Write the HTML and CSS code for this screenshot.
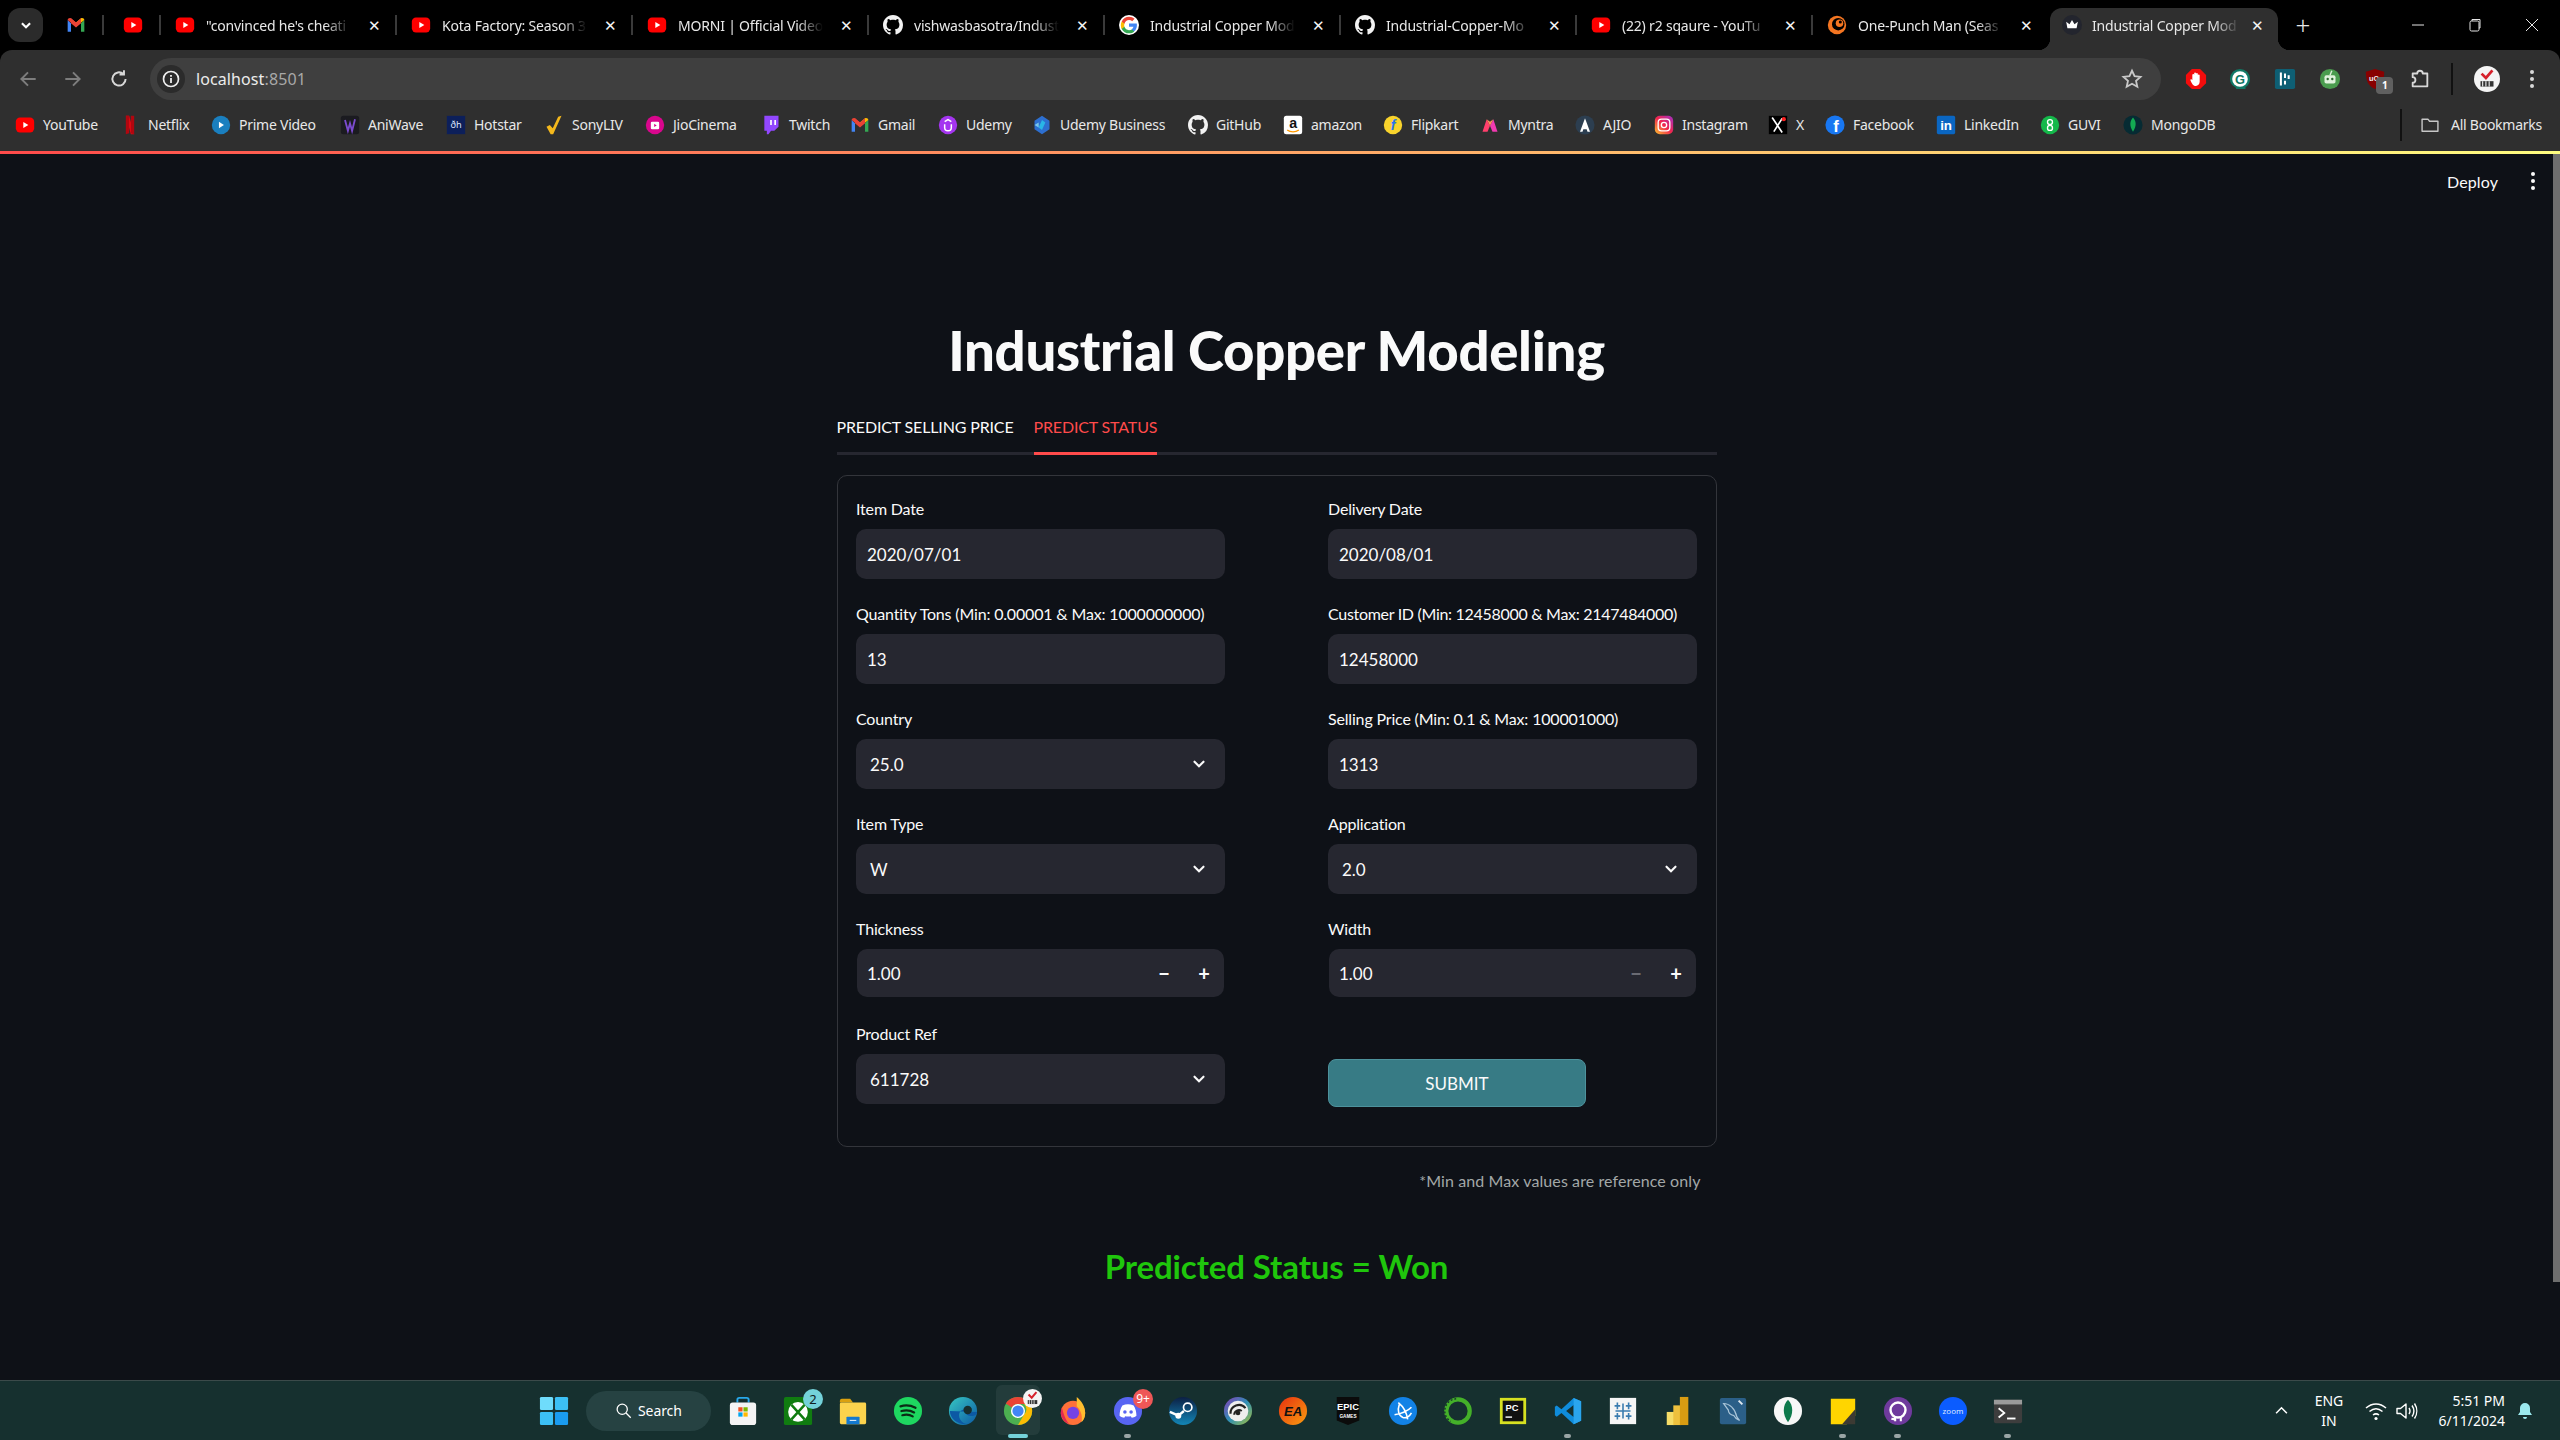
FILE: index.html
```html
<!DOCTYPE html>
<html lang="en">
<head>
<meta charset="utf-8">
<title>Industrial Copper Modeling</title>
<link rel="stylesheet" href="styles.css">
</head>
<body>
<svg class="defs" width="0" height="0" aria-hidden="true">
  <symbol id="yt" viewBox="0 0 24 24"><rect x="1" y="3" width="22" height="18" rx="5" fill="#f00"/><path d="M10 8.500l6 3.500-6 3.500z" fill="#fff"/></symbol>
  <symbol id="gm" viewBox="0 0 24 24"><path d="M2 6v14h4V10z" fill="#4285f4"/><path d="M22 6v14h-4V10z" fill="#34a853"/><path d="M2 6c0-2 2.500-3 4-2l6 5v5L2 6z" fill="#ea4335"/><path d="M22 6c0-2-2.500-3-4-2l-6 5v5l10-8z" fill="#fbbc04"/><path d="M6 4l6 5 6-5v6l-6 5-6-5z" fill="#ea4335"/></symbol>
  <symbol id="gh" viewBox="0 0 16 16"><path fill="#f2f2f2" d="M8 0C3.58 0 0 3.58 0 8c0 3.54 2.29 6.530 5.470 7.590.4.070.550-.170.550-.380 0-.190-.010-.820-.010-1.490-2.010.370-2.530-.490-2.690-.940-.090-.230-.480-.940-.820-1.130-.280-.150-.680-.520-.010-.530.630-.010 1.080.580 1.230.820.720 1.210 1.870.870 2.330.660.070-.520.280-.870.510-1.070-1.780-.200-3.640-.890-3.640-3.950 0-.870.310-1.590.820-2.150-.080-.200-.360-1.020.080-2.120 0 0 .670-.210 2.200.820.640-.180 1.320-.270 2-.270s1.360.090 2 .270c1.530-1.040 2.200-.820 2.200-.820.440 1.100.160 1.920.080 2.120.510.560.820 1.270.820 2.150 0 3.070-1.870 3.750-3.650 3.950.290.250.540.730.540 1.480 0 1.070-.010 1.930-.010 2.200 0 .210.150.460.550.38A8.013 8.013 0 0016 8c0-4.420-3.580-8-8-8z"/></symbol>
  <symbol id="gg" viewBox="0 0 48 48"><circle cx="24" cy="24" r="24" fill="#fff"/><path fill="#4285f4" d="M43 24.400c0-1.300-.100-2.600-.400-3.900H24v7.400h10.700c-.500 2.400-1.900 4.500-3.900 5.800v4.800h6.300c3.700-3.400 5.900-8.400 5.900-14.100z"/><path fill="#34a853" d="M24 44c5.300 0 9.700-1.700 13-4.700l-6.300-4.800c-1.800 1.200-4 1.900-6.700 1.900-5.100 0-9.500-3.400-11-8.100H6.500v5C9.800 39.700 16.500 44 24 44z"/><path fill="#fbbc04" d="M13 28.300c-.800-2.400-.800-5.100 0-7.600v-5H6.500c-2.800 5.500-2.800 12 0 17.600z"/><path fill="#ea4335" d="M24 11.900c2.900-.100 5.600 1 7.700 3l5.700-5.700C33.800 5.800 29 3.900 24 4 16.500 4 9.800 8.300 6.500 15.700l6.500 5c1.500-4.700 5.900-8.800 11-8.800z"/></symbol>
  <symbol id="cr" viewBox="0 0 24 24"><circle cx="12" cy="12" r="11" fill="#f47521"/><circle cx="13.500" cy="11" r="7.500" fill="#000"/><circle cx="15" cy="10" r="4.500" fill="#f47521"/><circle cx="16" cy="8.500" r="1.800" fill="#000"/></symbol>
  <symbol id="crown" viewBox="0 0 24 24"><circle cx="12" cy="12" r="12" fill="#23252e"/><path d="M5 8l4 3 3-5 3 5 4-3-1.500 8h-11z" fill="#fff"/></symbol>
  <symbol id="nf" viewBox="0 0 24 24"><path d="M7 1h4l6 22h-4z" fill="#e50914"/><path d="M7 1h4v21l-4 1z" fill="#b1060f"/><path d="M13 1h4v22l-4-1z" fill="#b1060f"/></symbol>
  <symbol id="pv" viewBox="0 0 24 24"><circle cx="12" cy="12" r="11" fill="#1a7fbf"/><path d="M9.500 8l6 4-6 4z" fill="#fff"/></symbol>
  <symbol id="aw" viewBox="0 0 24 24"><rect x="1" y="1" width="22" height="22" rx="3" fill="#1b1b20"/><path d="M6 6l3.500 13L12 10l2.500 9L18 5" fill="none" stroke="#7b4bd0" stroke-width="2.200"/></symbol>
  <symbol id="sl" viewBox="0 0 24 24"><path d="M3 14l5 9h3L21 1l-4 1-6.500 14L7 12z" fill="#f4b81c"/></symbol>
  <symbol id="jc" viewBox="0 0 24 24"><circle cx="12" cy="12" r="11" fill="#d9068d"/><rect x="7" y="8" width="10" height="9" rx="1.500" fill="#fff"/><path d="M11 10.500l3 2-3 2z" fill="#d9068d"/></symbol>
  <symbol id="tw" viewBox="0 0 24 24"><path d="M4 1h17v13l-5 5h-4l-3 4H7v-4H4z" fill="#9147ff"/><path d="M11 6h2v6h-2zM16 6h2v6h-2z" fill="#fff"/></symbol>
  <symbol id="ud" viewBox="0 0 24 24"><circle cx="12" cy="12" r="11" fill="#a435f0"/><path d="M8 11v4a4 4 0 008 0v-4M8 8l4-2.500L16 8" fill="none" stroke="#fff" stroke-width="1.800"/></symbol>
  <symbol id="ub" viewBox="0 0 24 24"><path d="M12 1l9 6v10l-9 6-9-6V7z" fill="#2d6fd0"/><path d="M12 6l4 3-4 9-4-3z" fill="#29b6e6"/><path d="M3 12l5-3v6z" fill="#7ac8ea"/></symbol>
  <symbol id="my" viewBox="0 0 24 24"><path d="M3 20L8 5l4 8-3 7z" fill="#ff3f6c"/><path d="M21 20L16 5l-4 8 3 7z" fill="#f13ab1"/><path d="M8 5l4 8 4-8-4 3z" fill="#ff905a"/></symbol>
  <symbol id="aj" viewBox="0 0 24 24"><circle cx="12" cy="12" r="11.500" fill="#2c3e50"/><path d="M12 4l6 16h-3l-1-3h-4l-1 3H6z" fill="#fff"/></symbol>
  <symbol id="ig" viewBox="0 0 24 24"><defs><linearGradient id="igg" x1="0" y1="1" x2="1" y2="0"><stop offset="0" stop-color="#fdc12c"/><stop offset=".5" stop-color="#f0264e"/><stop offset="1" stop-color="#a22fc9"/></linearGradient></defs><rect x="1" y="1" width="22" height="22" rx="6" fill="url(#igg)"/><rect x="5" y="5" width="14" height="14" rx="4" fill="none" stroke="#fff" stroke-width="1.600"/><circle cx="12" cy="12" r="3.200" fill="none" stroke="#fff" stroke-width="1.600"/></symbol>
  <symbol id="xl" viewBox="0 0 24 24"><rect x="1" y="1" width="22" height="22" fill="#000"/><path d="M5 3l12 18M17 4L7 20" stroke="#fff" stroke-width="2"/><circle cx="19" cy="5" r="2.500" fill="#f22"/></symbol>
  <symbol id="gv" viewBox="0 0 24 24"><circle cx="12" cy="12" r="11" fill="#14b84a"/><circle cx="12" cy="8.500" r="3" fill="none" stroke="#fff" stroke-width="1.600"/><circle cx="12" cy="15.500" r="3" fill="none" stroke="#fff" stroke-width="1.600"/></symbol>
  <symbol id="mg" viewBox="0 0 24 24"><circle cx="12" cy="12" r="11.500" fill="#062b33"/><path d="M12 3c4 4.500 4.500 10 0 17-4.500-7-4-12.500 0-17z" fill="#13aa52"/></symbol>
  <symbol id="folder" viewBox="0 0 24 24"><path d="M2.500 5h7l2 2.500h10v12h-19z" fill="none" stroke="#c7c7c7" stroke-width="1.700" stroke-linejoin="round"/></symbol>

  <symbol id="x-adb" viewBox="0 0 24 24"><path d="M7.500 1h9L23 7.500v9L16.500 23h-9L1 16.500v-9z" fill="#f40c0c"/><path d="M8 11V7.500a1 1 0 012 0V6a1 1 0 012 0v.500a1 1 0 012 0V8a1 1 0 012 0v7c0 3-2 4.500-4 4.500-3 0-4-1.500-6-6-.500-1.200 1-2 2-.500z" fill="#fff"/></symbol>
  <symbol id="x-bl" viewBox="0 0 24 24"><rect x="1" y="1" width="22" height="22" rx="2" fill="#0e5f74"/><path d="M7.500 5v14M12 6v5M12 14v4M16 8v4" stroke="#fff" stroke-width="2.200"/></symbol>
  <symbol id="x-an" viewBox="0 0 24 24"><circle cx="12" cy="12" r="11" fill="#4a9c4e"/><rect x="6" y="8" width="12" height="9" rx="2" fill="#dff2dc"/><circle cx="9.500" cy="12" r="1.300" fill="#2e6b31"/><circle cx="14.500" cy="12" r="1.300" fill="#2e6b31"/><path d="M12 8l2-5" stroke="#dff2dc" stroke-width="1.500"/></symbol>
  <symbol id="puzzle" viewBox="0 0 24 24"><path d="M4 6h5a3 3 0 016 0h5v14H4v-4a3 3 0 000-6z" fill="none" stroke="#d8d8d8" stroke-width="2" stroke-linejoin="round"/></symbol>
  <symbol id="avatar" viewBox="0 0 24 24"><circle cx="12" cy="12" r="12" fill="#f4f4f4"/><path d="M7 7l4 4 6-7" fill="none" stroke="#d6202a" stroke-width="2.500"/><rect x="6" y="14" width="12" height="5" fill="#333"/><path d="M8 14v5M11 14v5M14 14v5" stroke="#f4f4f4"/></symbol>

  <symbol id="start" viewBox="0 0 32 32"><rect x="1" y="1" width="14" height="14" rx="1.500" fill="#6fdcfb"/><rect x="17" y="1" width="14" height="14" rx="1.500" fill="#3cc0f5"/><rect x="1" y="17" width="14" height="14" rx="1.500" fill="#3cc0f5"/><rect x="17" y="17" width="14" height="14" rx="1.500" fill="#1a9bef"/></symbol>
  <symbol id="store" viewBox="0 0 32 32"><path d="M10 7V4a2 2 0 012-2h8a2 2 0 012 2v3" fill="none" stroke="#28a8ea" stroke-width="2"/><rect x="2" y="7" width="28" height="24" rx="3" fill="#f4f4f4"/><rect x="11" y="12" width="4.500" height="4.500" fill="#f25022"/><rect x="16.500" y="12" width="4.500" height="4.500" fill="#7fba00"/><rect x="11" y="17.500" width="4.500" height="4.500" fill="#00a4ef"/><rect x="16.500" y="17.500" width="4.500" height="4.500" fill="#ffb900"/></symbol>
  <symbol id="xbox" viewBox="0 0 32 32"><rect x="1" y="1" width="30" height="30" rx="2" fill="#107c10"/><circle cx="16" cy="17" r="10.500" fill="#fff"/><path d="M9 9.500L23 25M23 9.500L9 25" stroke="#107c10" stroke-width="2.600"/></symbol>
  <symbol id="expl" viewBox="0 0 32 32"><path d="M2 5a2 2 0 012-2h9l3 4h-14z" fill="#dba10f"/><rect x="2" y="7" width="28" height="23" rx="1.500" fill="#fcd34d"/><path d="M10 22h12a1 1 0 011 1v7H9v-7a1 1 0 011-1z" fill="#1479cf"/><path d="M12.500 26h7" stroke="#fff" stroke-width="1"/></symbol>
  <symbol id="spot" viewBox="0 0 32 32"><circle cx="16" cy="16" r="15" fill="#1ed760"/><path d="M8 11c5-1.500 11-1 16 1.500M9 16c4.500-1.200 9.500-.800 13.500 1.500M10 20.500c4-1 8-.600 11 1.200" fill="none" stroke="#0b2b15" stroke-width="2.400" stroke-linecap="round"/></symbol>
  <symbol id="edge" viewBox="0 0 32 32"><defs><linearGradient id="eg" x1="0" y1="0" x2="1" y2="1"><stop offset="0" stop-color="#37c8c3"/><stop offset="1" stop-color="#0c59a4"/></linearGradient></defs><circle cx="16" cy="16" r="15" fill="url(#eg)"/><path d="M31 17c0 4-5 5-8 4-4-1-6-4-4-7-6 0-9 5-6 11 2 3 5 5 8 5-10 1-19-5-19-14" fill="#0c59a4"/><circle cx="21" cy="15" r="4.500" fill="#16302f"/></symbol>
  <symbol id="chrome" viewBox="0 0 32 32"><circle cx="16" cy="16" r="15" fill="#4caf50"/><path d="M16 1a15 15 0 0113 7.500H16a7.500 7.500 0 00-6.500 3.700L3 8A15 15 0 0116 1z" fill="#ea4335"/><path d="M29 8.500A15 15 0 0116 31l6.500-11.300a7.500 7.500 0 000-11.200z" fill="#fbbc04"/><circle cx="16" cy="16" r="7.500" fill="#fff"/><circle cx="16" cy="16" r="6" fill="#4285f4"/></symbol>
  <symbol id="ffx" viewBox="0 0 32 32"><circle cx="16" cy="18" r="13" fill="#ff7139"/><path d="M20 1c5 4 9 10 9 17 0 5-2 8-4 10 2-8-2-14-5-17z" fill="#ffbd2f"/><path d="M4 12c-1 3-1 5-1 7 1 6 5 10 9 11-4-4-6-11-8-18z" fill="#e22850"/><circle cx="16" cy="18" r="6.500" fill="#7542e5"/></symbol>
  <symbol id="disc" viewBox="0 0 32 32"><circle cx="16" cy="16" r="15" fill="#5865f2"/><path d="M10 10c4-1.500 8-1.500 12 0 2 3 3 7 3 11-2 1.500-3.500 2-5 2.200l-1-1.700c-2 .500-4 .500-6 0l-1 1.700c-1.500-.200-3-.700-5-2.200 0-4 1-8 3-11z" fill="#fff"/><circle cx="12.700" cy="17" r="1.900" fill="#5865f2"/><circle cx="19.300" cy="17" r="1.900" fill="#5865f2"/></symbol>
  <symbol id="steam" viewBox="0 0 32 32"><defs><linearGradient id="st" x1="0" y1="0" x2="0" y2="1"><stop offset="0" stop-color="#0c1f43"/><stop offset="1" stop-color="#1387b8"/></linearGradient></defs><circle cx="16" cy="16" r="15" fill="url(#st)"/><circle cx="21" cy="12" r="4.500" fill="none" stroke="#fff" stroke-width="1.800"/><path d="M2 17l9 4 6-5" fill="none" stroke="#fff" stroke-width="2.600"/><circle cx="11" cy="21" r="3.200" fill="#fff"/></symbol>
  <symbol id="ubi" viewBox="0 0 32 32"><defs><linearGradient id="ubg" x1="0" y1="0" x2="1" y2="1"><stop offset="0" stop-color="#8a3bb7"/><stop offset=".5" stop-color="#2f8fb6"/><stop offset="1" stop-color="#a8c23c"/></linearGradient></defs><circle cx="16" cy="16" r="15" fill="url(#ubg)"/><circle cx="16" cy="16" r="11" fill="#eee"/><path d="M8 19a9 9 0 0116-6M12 20a5 5 0 018-4" fill="none" stroke="#222" stroke-width="2.200"/><circle cx="16" cy="18" r="2.500" fill="#222"/></symbol>
  <symbol id="bnet" viewBox="0 0 32 32"><circle cx="16" cy="16" r="15" fill="#1282e6"/><path d="M11 7c5 4 9 11 10 18M7 20c6-1 13-3 18-8M12 9c-2 6-1 12 4 14 3 1 7-1 9-5" fill="none" stroke="#fff" stroke-width="1.700"/></symbol>
  <symbol id="ring" viewBox="0 0 32 32"><circle cx="16" cy="16" r="12.500" fill="none" stroke="#44b029" stroke-width="4.500"/><path d="M14 3a13 13 0 00-6 24" fill="none" stroke="#16302f" stroke-width="1.500" stroke-dasharray="2 2"/></symbol>
  <symbol id="vs" viewBox="0 0 32 32"><path d="M22 2l8 3.500v21L22 30 9 18l-5 4-2-1.500v-9L4 10l5 4z" fill="#0f8cdb"/><path d="M22 9.500L14 16l8 6.500z" fill="#16302f"/><path d="M22 2l8 3.500v21L22 30z" fill="#2aa5ee"/></symbol>
  <symbol id="tab" viewBox="0 0 32 32"><rect x="2" y="2" width="28" height="28" fill="#f5f5f5"/><path d="M16 8v16M8 16h16M10 7v7M7 10.500h6M22 7v7M19 10.500h6M10 18v7M7 21.500h6M22 18v7M19 21.500h6" stroke="#3a7cb0" stroke-width="1.700"/></symbol>
  <symbol id="pbi" viewBox="0 0 32 32"><rect x="4" y="17" width="8" height="14" fill="#f6dd68"/><rect x="11" y="10" width="8" height="21" fill="#eec03d"/><rect x="18" y="1" width="9" height="30" fill="#d99c12"/></symbol>
  <symbol id="sql" viewBox="0 0 32 32"><rect x="2" y="2" width="28" height="28" rx="2" fill="#2b5f88"/><path d="M6 8c6 0 12 5 14 14 1 2 2 3 3 4-3-1-5-3-6-5-4-1-6-3-6-6L6 8z" fill="none" stroke="#a8c4d8" stroke-width="1.300"/><path d="M22 5l4 4" stroke="#dfe9f0" stroke-width="2"/></symbol>
  <symbol id="mgw" viewBox="0 0 32 32"><circle cx="16" cy="16" r="15" fill="#f7f7f7"/><path d="M16 4c6 6 6 16 0 24-6-8-6-18 0-24z" fill="#0e7a4c"/></symbol>
  <symbol id="note" viewBox="0 0 32 32"><path d="M3 3h26v18l-9 9H3z" fill="#ffd500"/><path d="M29 14v16H15z" fill="#3c3a33"/></symbol>
  <symbol id="ghd" viewBox="0 0 32 32"><circle cx="16" cy="16" r="15" fill="#6f3a9d"/><circle cx="16" cy="15" r="8" fill="none" stroke="#fff" stroke-width="2.600"/><path d="M13 22v5M19 22v5M9 24c2 1 3 1 4 0" fill="none" stroke="#fff" stroke-width="2.200"/></symbol>
  <symbol id="term" viewBox="0 0 32 32"><rect x="1" y="4" width="30" height="25" rx="2" fill="#3d3d3d"/><rect x="1" y="4" width="30" height="5" fill="#9a9a9a"/><path d="M6 13l6 5-6 5" fill="none" stroke="#fff" stroke-width="2"/><path d="M15 24h9" stroke="#fff" stroke-width="2"/></symbol>
  <symbol id="chev" viewBox="0 0 16 16"><path d="M4 6l4 4 4-4" fill="none" stroke="#fafafa" stroke-width="1.900" stroke-linecap="round"/></symbol>
</svg>

<div class="app">
  <header class="chrome">
    <div class="tabstrip">
      <button class="tabs-menu" aria-label="Tabs"><svg class="mini" viewBox="0 0 12 12"><path d="M2.500 4.500L6 8l3.500-3.500" fill="none" stroke="#fff" stroke-width="1.800"/></svg></button>
      <div class="tab pin pin-first"><svg class="fav"><use href="#gm"/></svg></div>
      <div class="tab pin"><svg class="fav"><use href="#yt"/></svg></div>
      <div class="tab"><svg class="fav"><use href="#yt"/></svg><span class="tab-title">"convinced he's cheati</span><span class="tab-x">✕</span></div>
      <div class="tab"><svg class="fav"><use href="#yt"/></svg><span class="tab-title">Kota Factory: Season 3</span><span class="tab-x">✕</span></div>
      <div class="tab"><svg class="fav"><use href="#yt"/></svg><span class="tab-title">MORNI | Official Video</span><span class="tab-x">✕</span></div>
      <div class="tab"><svg class="fav"><use href="#gh"/></svg><span class="tab-title">vishwasbasotra/Indust</span><span class="tab-x">✕</span></div>
      <div class="tab"><svg class="fav"><use href="#gg"/></svg><span class="tab-title">Industrial Copper Mod</span><span class="tab-x">✕</span></div>
      <div class="tab"><svg class="fav"><use href="#gh"/></svg><span class="tab-title">Industrial-Copper-Mo</span><span class="tab-x">✕</span></div>
      <div class="tab"><svg class="fav"><use href="#yt"/></svg><span class="tab-title">(22) r2 sqaure - YouTu</span><span class="tab-x">✕</span></div>
      <div class="tab tab-noline"><svg class="fav"><use href="#cr"/></svg><span class="tab-title">One-Punch Man (Seas</span><span class="tab-x">✕</span></div>
      <div class="tab tab-active"><svg class="fav"><use href="#crown"/></svg><span class="tab-title">Industrial Copper Mod</span><span class="tab-x">✕</span></div>
      <span class="newtab">+</span>
      <div class="winctl">
        <svg class="win" viewBox="0 0 16 16"><path d="M2 8h12" stroke="#e5e5e5" stroke-width="1"/></svg>
        <svg class="win" viewBox="0 0 16 16"><rect x="3" y="4" width="9" height="10" rx="1.500" fill="none" stroke="#e5e5e5"/><path d="M5 4V2.500h8V11h-1" fill="none" stroke="#e5e5e5"/></svg>
        <svg class="win" viewBox="0 0 16 16"><path d="M2 2l12 12M14 2L2 14" stroke="#e5e5e5" stroke-width="1"/></svg>
      </div>
    </div>

    <div class="toolbar">
      <span class="nav"><svg class="nav-ico" viewBox="0 0 20 20"><path d="M17 10H4M10 4l-6 6 6 6" fill="none" stroke="#7d7d7d" stroke-width="1.800"/></svg></span>
      <span class="nav"><svg class="nav-ico" viewBox="0 0 20 20"><path d="M3 10h13M10 4l6 6-6 6" fill="none" stroke="#7d7d7d" stroke-width="1.800"/></svg></span>
      <span class="nav"><svg class="nav-ico" viewBox="0 0 20 20"><path d="M16 10a6 6 0 11-2-4.500M14.500 2v4h-4" fill="none" stroke="#d8d8d8" stroke-width="1.800"/></svg></span>
      <div class="omnibox">
        <span class="site-info"><svg class="info" viewBox="0 0 20 20"><circle cx="10" cy="10" r="7.500" fill="none" stroke="#eee" stroke-width="1.700"/><path d="M10 9v5M10 6v1.700" stroke="#eee" stroke-width="1.800"/></svg></span>
        <span class="url">localhost<span class="url-port">:8501</span></span>
        <svg class="star" viewBox="0 0 24 24"><path d="M12 3l2.800 6 6.500.700-4.900 4.400 1.400 6.400L12 17.200 6.200 20.500l1.400-6.400L2.700 9.700 9.200 9z" fill="none" stroke="#c8c8c8" stroke-width="2"/></svg>
      </div>
      <div class="extensions">
        <span class="ext"><svg class="ext-ico"><use href="#x-adb"/></svg></span>
        <span class="ext"><svg class="ext-ico" viewBox="0 0 24 24"><path d="M12 1a11 11 0 0111 11c0 4-2 7-5 9v2H8l-1-2c-4-2-6-5-6-9A11 11 0 0112 1z" fill="#117865"/><circle cx="12" cy="12" r="8.500" fill="#fff"/><text x="12" y="17" font-size="14" font-weight="700" fill="#117865" text-anchor="middle" font-family="Liberation Sans">G</text></svg></span>
        <span class="ext"><svg class="ext-ico"><use href="#x-bl"/></svg></span>
        <span class="ext"><svg class="ext-ico"><use href="#x-an"/></svg></span>
        <span class="ext"><svg class="ext-ico" viewBox="0 0 24 24"><path d="M12 1l10 3c0 9-2 15-10 19C4 19 2 13 2 4z" fill="#800"/><text x="11" y="14" font-size="8" font-weight="700" fill="#eee" text-anchor="middle" font-family="Liberation Sans">uO</text></svg><b class="ext-badge">1</b></span>
        <span class="ext"><svg class="ext-ico"><use href="#puzzle"/></svg></span>
        <i class="tool-sep"></i>
        <span class="ext ext-avatar"><svg class="avatar"><use href="#avatar"/></svg></span>
        <span class="ext ext-menu"><i class="dots"></i></span>
      </div>
    </div>

    <nav class="bookmarks">
      <div class="bm-list">
        <a class="bm"><svg class="bm-ico"><use href="#yt"/></svg>YouTube</a>
        <a class="bm"><svg class="bm-ico"><use href="#nf"/></svg>Netflix</a>
        <a class="bm"><svg class="bm-ico"><use href="#pv"/></svg>Prime Video</a>
        <a class="bm"><svg class="bm-ico"><use href="#aw"/></svg>AniWave</a>
        <a class="bm"><svg class="bm-ico" viewBox="0 0 24 24"><rect x="1" y="1" width="22" height="22" fill="#0c1f5a"/><text x="12" y="16" font-size="11" fill="#dfe6ff" text-anchor="middle" font-family="Noto Sans">ðh</text></svg>Hotstar</a>
        <a class="bm"><svg class="bm-ico"><use href="#sl"/></svg>SonyLIV</a>
        <a class="bm"><svg class="bm-ico"><use href="#jc"/></svg>JioCinema</a>
        <a class="bm"><svg class="bm-ico"><use href="#tw"/></svg>Twitch</a>
        <a class="bm"><svg class="bm-ico"><use href="#gm"/></svg>Gmail</a>
        <a class="bm"><svg class="bm-ico"><use href="#ud"/></svg>Udemy</a>
        <a class="bm"><svg class="bm-ico"><use href="#ub"/></svg>Udemy Business</a>
        <a class="bm"><svg class="bm-ico"><use href="#gh"/></svg>GitHub</a>
        <a class="bm"><svg class="bm-ico" viewBox="0 0 24 24"><rect x="1" y="1" width="22" height="22" rx="3" fill="#fff"/><text x="12" y="16" font-size="17" font-weight="700" fill="#111" text-anchor="middle" font-family="Liberation Sans">a</text><path d="M5 18c4 3 10 3 14 0" fill="none" stroke="#f90" stroke-width="1.600"/></svg>amazon</a>
        <a class="bm"><svg class="bm-ico" viewBox="0 0 24 24"><circle cx="12" cy="12" r="11" fill="#f8d32c"/><text x="12" y="18" font-size="17" font-weight="700" font-style="italic" fill="#2874f0" text-anchor="middle" font-family="Liberation Sans">f</text></svg>Flipkart</a>
        <a class="bm"><svg class="bm-ico"><use href="#my"/></svg>Myntra</a>
        <a class="bm"><svg class="bm-ico"><use href="#aj"/></svg>AJIO</a>
        <a class="bm"><svg class="bm-ico"><use href="#ig"/></svg>Instagram</a>
        <a class="bm"><svg class="bm-ico"><use href="#xl"/></svg>X</a>
        <a class="bm"><svg class="bm-ico" viewBox="0 0 24 24"><circle cx="12" cy="12" r="11.500" fill="#1877f2"/><text x="13" y="20" font-size="20" font-weight="700" fill="#fff" text-anchor="middle" font-family="Liberation Sans">f</text></svg>Facebook</a>
        <a class="bm"><svg class="bm-ico" viewBox="0 0 24 24"><rect x="1" y="1" width="22" height="22" rx="2" fill="#0a66c2"/><text x="12" y="18" font-size="16" font-weight="700" fill="#fff" text-anchor="middle" font-family="Liberation Sans">in</text></svg>LinkedIn</a>
        <a class="bm"><svg class="bm-ico"><use href="#gv"/></svg>GUVI</a>
        <a class="bm"><svg class="bm-ico"><use href="#mg"/></svg>MongoDB</a>
      </div>
      <i class="bm-sep"></i>
      <a class="bm bm-all"><svg class="bm-ico"><use href="#folder"/></svg>All Bookmarks</a>
    </nav>
    <div class="deco"></div>
  </header>

  <div class="viewport">
    <main class="page">
      <div class="st-header"><span class="deploy">Deploy</span><i class="dots st-dots"></i></div>
      <div class="block">
        <h1 class="title">Industrial Copper Modeling</h1>
        <div class="st-tabs">
          <span class="st-tab">PREDICT SELLING PRICE</span>
          <span class="st-tab st-tab-active">PREDICT STATUS</span>
        </div>
        <form class="form">
          <div class="field"><label class="lbl">Item Date</label><div class="ctl">2020/07/01</div></div>
          <div class="field"><label class="lbl">Delivery Date</label><div class="ctl">2020/08/01</div></div>
          <div class="field"><label class="lbl">Quantity Tons (Min: 0.00001 &amp; Max: 1000000000)</label><div class="ctl">13</div></div>
          <div class="field"><label class="lbl lbl-tight">Customer ID (Min: 12458000 &amp; Max: 2147484000)</label><div class="ctl">12458000</div></div>
          <div class="field"><label class="lbl">Country</label><div class="ctl ctl-select">25.0<svg class="chev"><use href="#chev"/></svg></div></div>
          <div class="field"><label class="lbl">Selling Price (Min: 0.1 &amp; Max: 100001000)</label><div class="ctl">1313</div></div>
          <div class="field"><label class="lbl">Item Type</label><div class="ctl ctl-select">W<svg class="chev"><use href="#chev"/></svg></div></div>
          <div class="field"><label class="lbl">Application</label><div class="ctl ctl-select">2.0<svg class="chev"><use href="#chev"/></svg></div></div>
          <div class="field"><label class="lbl">Thickness</label><div class="ctl ctl-num"><span class="num-val">1.00</span><span class="step">−</span><span class="step">+</span></div></div>
          <div class="field"><label class="lbl">Width</label><div class="ctl ctl-num"><span class="num-val">1.00</span><span class="step step-dim">−</span><span class="step">+</span></div></div>
          <div class="field"><label class="lbl">Product Ref</label><div class="ctl ctl-select">611728<svg class="chev"><use href="#chev"/></svg></div></div>
          <div class="field field-btn"><button class="submit" type="button">SUBMIT</button></div>
        </form>
        <p class="note">*Min and Max values are reference only</p>
        <h2 class="result">Predicted Status = Won</h2>
      </div>
    </main>
    <div class="scrolltrack"><div class="scrollthumb"></div></div>
  </div>

  <footer class="taskbar">
    <span class="tb tb-start"><svg class="tb-ico"><use href="#start"/></svg></span>
    <span class="search"><svg class="search-ico" viewBox="0 0 20 20"><circle cx="8.500" cy="8.500" r="6" fill="none" stroke="#fff" stroke-width="1.500"/><path d="M13 13l5.500 5.500" stroke="#fff" stroke-width="1.500"/></svg>Search</span>
    <div class="tb-apps">
      <span class="tb"><svg class="tb-ico"><use href="#store"/></svg></span>
      <span class="tb"><svg class="tb-ico"><use href="#xbox"/></svg><b class="tb-badge tb-badge-teal">2</b></span>
      <span class="tb"><svg class="tb-ico"><use href="#expl"/></svg></span>
      <span class="tb"><svg class="tb-ico"><use href="#spot"/></svg></span>
      <span class="tb"><svg class="tb-ico"><use href="#edge"/></svg></span>
      <span class="tb tb-active"><svg class="tb-ico"><use href="#chrome"/></svg><svg class="tb-over"><use href="#avatar"/></svg><i class="tb-bar"></i></span>
      <span class="tb"><svg class="tb-ico"><use href="#ffx"/></svg></span>
      <span class="tb"><svg class="tb-ico"><use href="#disc"/></svg><b class="tb-badge tb-badge-red">9+</b><i class="tb-dot"></i></span>
      <span class="tb"><svg class="tb-ico"><use href="#steam"/></svg></span>
      <span class="tb"><svg class="tb-ico"><use href="#ubi"/></svg></span>
      <span class="tb"><svg class="tb-ico" viewBox="0 0 32 32"><defs><linearGradient id="eag" x1="0" y1="0" x2="1" y2="1"><stop offset="0" stop-color="#e7300f"/><stop offset="1" stop-color="#fa9d10"/></linearGradient></defs><circle cx="16" cy="16" r="15" fill="url(#eag)"/><text x="16" y="21" font-size="14" font-weight="700" font-style="italic" fill="#111" text-anchor="middle" font-family="Liberation Sans">EA</text></svg></span>
      <span class="tb"><svg class="tb-ico" viewBox="0 0 32 32"><path d="M4 1h24v25l-12 5-12-5z" fill="#0b0b0b"/><text x="16" y="15" font-size="10" font-weight="700" fill="#fff" text-anchor="middle" font-family="Liberation Sans">EPIC</text><text x="16" y="23" font-size="5" font-weight="700" fill="#fff" text-anchor="middle" font-family="Liberation Sans">GAMES</text></svg></span>
      <span class="tb"><svg class="tb-ico"><use href="#bnet"/></svg></span>
      <span class="tb"><svg class="tb-ico"><use href="#ring"/></svg></span>
      <span class="tb"><svg class="tb-ico" viewBox="0 0 32 32"><rect x="2" y="2" width="28" height="28" fill="#d6e021"/><rect x="5" y="5" width="22" height="22" fill="#111"/><text x="8" y="16" font-size="10" font-weight="700" fill="#fff" font-family="Liberation Sans">PC</text><path d="M8 22.500h7" stroke="#fff" stroke-width="1.500"/></svg></span>
      <span class="tb"><svg class="tb-ico"><use href="#vs"/></svg><i class="tb-dot"></i></span>
      <span class="tb"><svg class="tb-ico"><use href="#tab"/></svg></span>
      <span class="tb"><svg class="tb-ico"><use href="#pbi"/></svg></span>
      <span class="tb"><svg class="tb-ico"><use href="#sql"/></svg></span>
      <span class="tb"><svg class="tb-ico"><use href="#mgw"/></svg></span>
      <span class="tb"><svg class="tb-ico"><use href="#note"/></svg><i class="tb-dot"></i></span>
      <span class="tb"><svg class="tb-ico"><use href="#ghd"/></svg><i class="tb-dot"></i></span>
      <span class="tb"><svg class="tb-ico" viewBox="0 0 32 32"><circle cx="16" cy="16" r="15" fill="#0b5cff"/><text x="16" y="19" font-size="8.500" fill="#dbe7ff" text-anchor="middle" font-family="Noto Sans">zoom</text></svg></span>
      <span class="tb"><svg class="tb-ico"><use href="#term"/></svg><i class="tb-dot"></i></span>
    </div>
    <div class="tray">
      <svg class="tray-chev" viewBox="0 0 16 10"><path d="M2 8l6-6 6 6" fill="none" stroke="#fff" stroke-width="1.700"/></svg>
      <span class="lang">ENG<br>IN</span>
      <svg class="tray-ico tray-wifi" viewBox="0 0 24 24"><path d="M2 9c6-5.500 14-5.500 20 0M5.500 12.500c4-3.500 9-3.500 13 0M9 16c2-1.500 4-1.500 6 0" fill="none" stroke="#fff" stroke-width="1.500"/><circle cx="12" cy="19.500" r="1.600" fill="#fff"/></svg>
      <svg class="tray-ico" viewBox="0 0 24 24"><path d="M3 9.500v5h3.500L12 19V5L6.500 9.500z" fill="none" stroke="#fff" stroke-width="1.400" stroke-linejoin="round"/><path d="M15 9c1.200 1.800 1.200 4.200 0 6M18 6.500c2.300 3.300 2.300 7.700 0 11M20.500 4.500c3 4.500 3 10.500 0 15" fill="none" stroke="#fff" stroke-width="1.400"/></svg>
      <span class="clock">5:51 PM<br>6/11/2024</span>
      <svg class="bell" viewBox="0 0 20 20"><path d="M10 2a5 5 0 015 5v4l2 3H3l2-3V7a5 5 0 015-5z" fill="#9be9ee"/><path d="M8 16h4a2 2 0 01-4 0z" fill="#9be9ee"/></svg>
    </div>
  </footer>
</div>
</body>
</html>
```

FILE: styles.css
```css
* { box-sizing: border-box; }
html, body { margin: 0; padding: 0; height: 100%; background: #0e1117; overflow: hidden; }
.defs { display: block; width: 0; height: 0; overflow: hidden; }
.app { display: flex; flex-direction: column; width: 2560px; height: 1440px; font-family: "Noto Sans", "Liberation Sans", sans-serif; }

/* browser chrome */
.chrome { flex: none; background: #000; color: #e8e8e8; font-size: 14px; }
.tabstrip { display: flex; align-items: flex-end; height: 50px; padding-left: 8px; background: #000; }
.tabs-menu { flex: none; display: flex; align-items: center; justify-content: center; width: 35px; height: 34px; margin: 0 4px 8px 0; padding: 0; border: 0; border-radius: 12px; background: #2b2b2b; }
.mini { width: 14px; height: 14px; }
.tab { position: relative; flex: none; display: flex; align-items: center; width: 236px; height: 42px; padding: 0 13px 8px 14px; }
.tab::after { content: ""; position: absolute; right: 0; top: 7px; width: 2px; height: 20px; background: #3a3a3a; }
.tab-noline::after { display: none; }
.pin { width: 57px; justify-content: center; padding: 0 0 8px; }
.fav { flex: none; width: 20px; height: 20px; }
.tab-title { flex: 1; min-width: 0; margin: 0 13px 0 11px; white-space: nowrap; overflow: hidden; letter-spacing: -.2px; -webkit-mask-image: linear-gradient(90deg, #000 82%, transparent); mask-image: linear-gradient(90deg, #000 82%, transparent); }
.tab-x { flex: none; width: 20px; text-align: center; font-size: 15px; color: #f4f4f4; }
.tab-active { z-index: 1; width: 228px; margin-left: 1px; padding: 0 11px 8px 12px; border-radius: 12px 12px 0 0; background: #2f2f2f; }
.tab-active::after { display: none; }
.tab-active .tab-title { margin: 0 7px 0 10px; }
.tab-active::before { content: ""; position: absolute; left: -12px; right: -12px; bottom: 0; height: 12px; background: radial-gradient(circle at 0 0, #000 12px, transparent 12.500px) left bottom / 12px 12px no-repeat, radial-gradient(circle at 100% 0, #000 12px, transparent 12.500px) right bottom / 12px 12px no-repeat, linear-gradient(#2f2f2f, #2f2f2f) center / 100% 100% no-repeat; z-index: -1; }
.newtab { width: 44px; height: 42px; margin-left: 3px; font-size: 26px; line-height: 34px; text-align: center; color: #e8e8e8; font-weight: 300; }
.winctl { display: flex; margin-left: auto; height: 50px; align-self: flex-start; align-items: center; }
.win { width: 16px; height: 16px; margin-left: 41px; }
.win:first-child { margin-left: 0; }
.win:last-child { margin-right: 20px; }

.toolbar { display: flex; align-items: center; height: 50px; padding: 8px 0 0 5px; border-radius: 12px 12px 0 0; background: #2f2f2f; }
.nav { flex: none; display: flex; justify-content: center; width: 45.500px; }
.nav-ico { width: 22px; height: 22px; }
.omnibox { flex: 1; display: flex; align-items: center; height: 42px; margin-left: 8.500px; padding: 0 18px 0 7px; border-radius: 21px; background: #3f3f3f; min-width: 0; }
.site-info { flex: none; display: flex; align-items: center; justify-content: center; width: 28px; height: 28px; border-radius: 50%; background: #2b2b2b; }
.info { width: 20px; height: 20px; }
.url { flex: 1; margin-left: 11px; font-size: 16px; color: #ececec; letter-spacing: .1px; }
.url-port { color: #a8a8a8; }
.star { flex: none; width: 22px; height: 22px; }
.extensions { flex: none; display: flex; align-items: center; margin-left: 12px; padding-right: 5px; }
.ext { position: relative; flex: none; display: flex; justify-content: center; width: 44.800px; }
.ext-ico { width: 22px; height: 22px; }
.ext-badge { position: absolute; left: 24px; top: 9px; min-width: 17px; height: 17px; border-radius: 4px; background: #606060; color: #fff; font-size: 10px; line-height: 17px; text-align: center; }
.tool-sep { flex: none; width: 2px; height: 32px; margin: 0 1px 0 9px; background: #111; }
.ext-avatar { width: 44px; margin-left: 11px; }
.avatar { width: 26px; height: 26px; }
.ext-menu { width: 46px; }
.dots { display: block; width: 4px; height: 4px; border-radius: 50%; background: #d8d8d8; box-shadow: 0 -7px 0 #d8d8d8, 0 7px 0 #d8d8d8; }

.bookmarks { display: flex; align-items: center; height: 51px; padding: 0 18px 2px 15px; background: #2f2f2f; }
.bm-list { flex: 1; display: grid; grid-template-columns: 105px 91px 129px 106px 98px 101px 116px 89px 88px 94px 156px 95px 100px 97px 95px 79px 114px 57px 111px 104px 83px auto; }
.bm { display: flex; align-items: center; gap: 8px; white-space: nowrap; color: #e8e8e8; font-size: 14px; letter-spacing: -.25px; }
.bm-ico { flex: none; width: 20px; height: 20px; }
.bm-sep { flex: none; width: 2px; height: 32px; margin-right: 18px; background: #111; }
.bm-all { flex: none; gap: 11px; }
.deco { height: 3px; background: linear-gradient(90deg, #ff4b4b, #fffd80); }

/* page */
.viewport { flex: 1; display: flex; min-height: 0; background: #0e1117; }
.page { flex: 1; min-width: 0; display: flex; flex-direction: column; align-items: center; color: #fafafa; font-family: "Lato", "Noto Sans", sans-serif; }
.st-header { align-self: stretch; display: flex; align-items: center; justify-content: flex-end; flex: none; height: 54px; padding-right: 18px; }
.deploy { margin-right: 33px; font-size: 16px; letter-spacing: .1px; }
.st-dots { background: #fafafa; box-shadow: 0 -7px 0 #fafafa, 0 7px 0 #fafafa; }
.block { flex: none; width: 880px; }
.title { margin: 100px 0 8px; font-size: 54.500px; line-height: 84px; font-weight: 900; text-align: center; letter-spacing: -.3px; }
.st-tabs { display: flex; gap: 20px; height: 55px; border-bottom: 3px solid #262730; }
.st-tab { height: 55px; padding-top: 15px; font-size: 16px; line-height: 24px; letter-spacing: -.15px; }
.st-tab-active { color: #ff4b4b; border-bottom: 3px solid #ff4b4b; }
.form { display: grid; grid-template-columns: 369px 369px; grid-auto-rows: 80px; column-gap: 103px; row-gap: 25px; margin-top: 20px; padding: 23px 18px 42px 18.500px; border: 1px solid #33353b; border-radius: 10px; }
.lbl { display: block; height: 20px; margin-bottom: 10px; font-size: 16px; line-height: 20px; white-space: nowrap; letter-spacing: -.17px; }
.lbl-tight { letter-spacing: -.3px; }
.ctl { display: flex; align-items: center; height: 50px; padding: 0 11px; border-radius: 10px; background: #262730; font-size: 17px; }
.ctl-select { justify-content: space-between; padding: 0 17px 0 14px; }
.chev { width: 18px; height: 18px; }
.ctl-num { height: 48px; margin: 1px; padding: 0 0 0 10px; }
.num-val { flex: 1; }
.step { flex: none; width: 40px; text-align: center; font-size: 20px; font-weight: 700; }
.step-dim { color: #6a6b73; }
.field-btn { padding-top: 35px; }
.submit { display: block; width: 258px; height: 48px; padding: 0; border: 1px solid #4d929c; border-radius: 8px; background: #377b85; color: #fafafa; font: 17px "Lato", "Noto Sans", sans-serif; }
.note { margin: 22px 16px 0 0; font-size: 16px; line-height: 24px; text-align: right; color: #a3a8a8; letter-spacing: .1px; }
.result { margin: 48px 0 0; font-size: 33px; line-height: 50px; font-weight: 700; text-align: center; color: #1fc60c; letter-spacing: -.1px; }
.scrolltrack { flex: none; width: 7px; background: #0e1117; }
.scrollthumb { height: 1128px; background: #6e6e6e; }

/* taskbar */
.taskbar { flex: none; display: flex; align-items: center; height: 60px; padding-left: 526px; border-top: 1px solid #3b4a4a; background: #16302f; color: #fff; font-family: "Noto Sans", sans-serif; }
.tb { position: relative; flex: none; display: flex; align-items: center; justify-content: center; width: 55px; height: 59px; }
.tb-ico { width: 30px; height: 30px; }
.search { flex: none; display: flex; align-items: center; gap: 6px; width: 125px; height: 40px; margin: 0 4px 0 5px; padding-left: 29px; border-radius: 20px; background: #264242; font-size: 14px; letter-spacing: -.1px; }
.search-ico { width: 17px; height: 17px; }
.tb-apps { flex: none; display: flex; }
.tb-badge { position: absolute; display: flex; align-items: center; justify-content: center; top: 8px; left: 33px; width: 20px; height: 20px; border-radius: 50%; font-size: 13px; font-weight: 400; line-height: 20px; }
.tb-badge-teal { background: #74d2da; color: #102020; }
.tb-badge-red { background: #ee5757; color: #fff; font-size: 12px; }
.tb-active::before { content: ""; position: absolute; left: 6px; top: 4px; width: 44px; height: 50px; border-radius: 6px; background: rgba(255, 255, 255, .06); }
.tb-active .tb-ico { position: relative; }
.tb-over { position: absolute; left: 33px; top: 8px; width: 19px; height: 19px; }
.tb-bar { position: absolute; left: 17.500px; bottom: 2px; width: 20px; height: 4px; border-radius: 2px; background: #74d2da; }
.tb-dot { position: absolute; left: 24px; bottom: 2px; width: 7px; height: 4px; border-radius: 2px; background: #9aa5a5; }
.tray { flex: none; display: flex; align-items: center; margin-left: 238.500px; font-size: 14px; line-height: 20px; }
.tray-chev { flex: none; width: 15px; height: 9px; margin-right: 18.500px; }
.lang { width: 44px; text-align: center; margin-right: 13px; }
.tray-ico { flex: none; width: 24px; height: 24px; margin-right: 6px; }
.clock { width: 86px; margin-left: -5px; text-align: right; }
.bell { flex: none; width: 20px; height: 20px; margin-left: 10px; }
```
